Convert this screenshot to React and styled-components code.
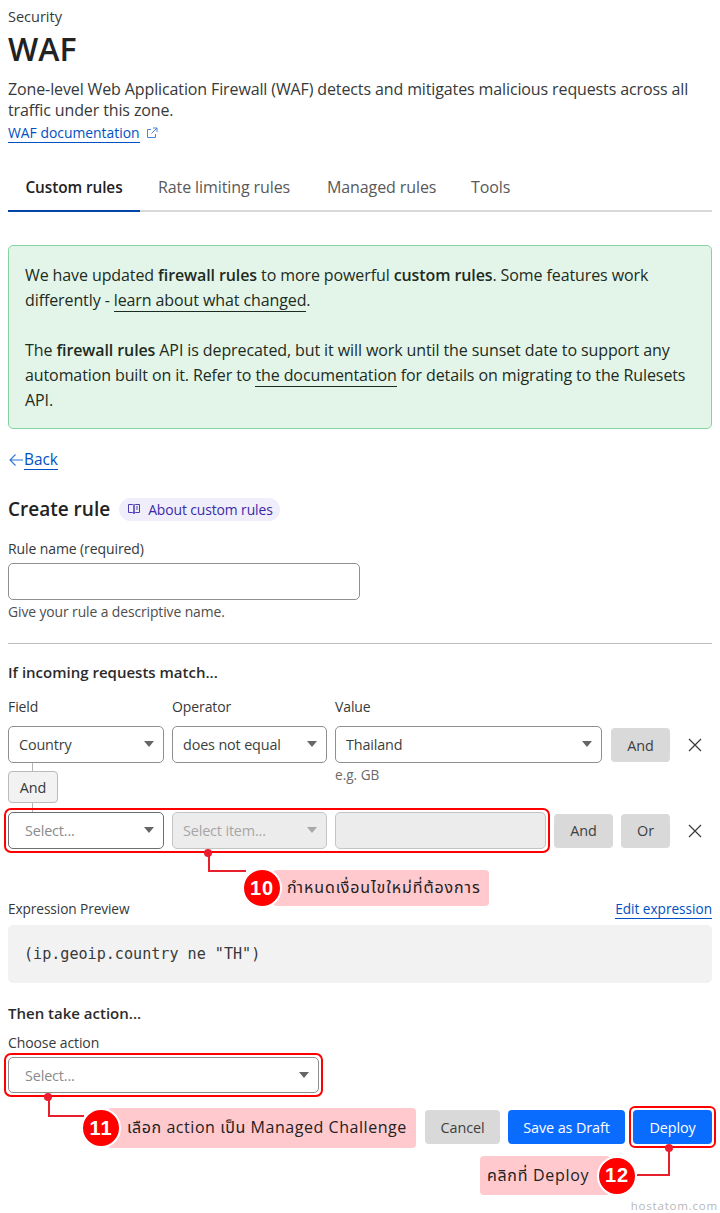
import React from "react";
import styled, { createGlobalStyle } from "styled-components";

const FONT = `"Open Sans", "Noto Sans", "Noto Sans Thai", "Liberation Sans", sans-serif`;

const Global = createGlobalStyle`
  html, body { margin: 0; padding: 0; background: #fff; }
  body { font-family: ${FONT}; color: #36393a; font-size: 14.5px; }
  * { box-sizing: border-box; }
`;

const Page = styled.div`
  width: 720px;
  height: 1213px;
  padding: 7px 8px 0;
  overflow: hidden;
`;

const Crumb = styled.div`
  font-size: 14.5px;
  line-height: 20px;
  color: #36393a;
`;
const Title = styled.h1`
  margin: 1px 0 9px;
  font-size: 32px;
  line-height: 42px;
  font-weight: 600;
  color: #222;
`;
const Lead = styled.p`
  margin: 0;
  font-size: 16px;
  line-height: 21px;
  letter-spacing: -0.12px;
`;
const DocLink = styled.div`
  display: flex;
  align-items: center;
  gap: 6px;
  margin-top: 1px;
  height: 22px;
  font-size: 13.9px;
  color: #0051c3;
  svg { color: #4d86d8; }
`;
const Underlined = styled.a`
  color: ${(p) => p.$color || "#0051c3"};
  border-bottom: 1px solid currentColor;
  line-height: ${(p) => p.$lh || "19px"};
  font-size: ${(p) => (p.$size ? `${p.$size}px` : "inherit")};
  text-decoration: none;
`;

const Tabs = styled.div`
  display: flex;
  margin-top: 23px;
  height: 45px;
  border-bottom: 2px solid #d9d9d9;
`;
const Tab = styled.div`
  width: ${(p) => p.$w}px;
  height: 45px;
  padding-top: ${(p) => (p.$active ? 10 : 9)}px;
  text-align: ${(p) => (p.$active ? "center" : "left")};
  padding-left: ${(p) => p.$pad || 0}px;
  font-size: ${(p) => (p.$active ? 15.4 : 16)}px;
  line-height: 22px;
  letter-spacing: -0.1px;
  font-weight: ${(p) => (p.$active ? 600 : 400)};
  color: ${(p) => (p.$active ? "#222" : "#595959")};
  border-bottom: ${(p) => (p.$active ? "2px solid #0045a6" : "none")};
`;

const Banner = styled.div`
  margin-top: 33px;
  height: 184px;
  padding: 17px 16px 0 16px;
  background: #e3f5e9;
  border: 1px solid #84d3a0;
  border-radius: 5px;
  font-size: 16px;
  line-height: 25px;
  letter-spacing: -0.1px;
  color: #1d2b22;
  p { margin: 0 0 25px; }
  b { font-weight: 600; }
`;

const Back = styled.div`
  display: flex;
  align-items: center;
  margin-top: 19px;
  height: 24px;
  font-size: 15.4px;
  color: #0051c3;
`;

const HeadingRow = styled.div`
  display: flex;
  align-items: center;
  gap: 9px;
  margin-top: 25px;
  height: 24px;
`;
const H2 = styled.h2`
  margin: 0;
  font-size: 19px;
  line-height: 24px;
  font-weight: 600;
  color: #222;
`;
const Pill = styled.div`
  display: flex;
  align-items: center;
  gap: 8px;
  height: 23px;
  padding: 0 7px 0 9px;
  border-radius: 12px;
  background: #f1eefc;
  color: #3a2aa8;
  font-size: 13.9px;
  letter-spacing: -0.1px;
`;

const Label = styled.div`
  font-size: 14px;
  line-height: 20px;
  letter-spacing: -0.1px;
  color: #36393a;
`;
const NameLabel = styled(Label)`
  margin-top: 18px;
  margin-bottom: 4px;
`;
const TextInput = styled.div`
  width: 352px;
  height: 37px;
  border: 1px solid #8f8f8f;
  border-radius: 5px;
`;
const Help = styled.div`
  margin-top: 2px;
  font-size: 13.9px;
  line-height: 19px;
  letter-spacing: -0.1px;
  color: #4d4d4d;
`;
const Divider = styled.hr`
  margin: 22px 0 0;
  border: 0;
  border-top: 1px solid #bdbdbd;
`;
const Subhead = styled.div`
  font-size: 15px;
  line-height: 20px;
  font-weight: 600;
  color: #2b2b2b;
  margin-top: ${(p) => p.$mt}px;
`;

const Row = styled.div`
  display: flex;
  align-items: flex-start;
  gap: 8px;
`;
const FirstRow = styled(Row)`
  margin-top: 15px;
  height: 115px;
`;
const Col = styled.div`
  width: ${(p) => p.$w}px;
  flex: none;
`;
const ColLabel = styled(Label)`
  height: 29px;
`;

const SelectBox = styled.div`
  position: relative;
  flex: none;
  width: ${(p) => (p.$w ? `${p.$w}px` : "100%")};
  height: ${(p) => p.$h || 37}px;
  padding-left: ${(p) => p.$pl || 10}px;
  display: flex;
  align-items: center;
  font-size: 14.4px;
  letter-spacing: -0.15px;
  border: 1px solid ${(p) => (p.$disabled ? "#c4c4c4" : p.$strong ? "#6e6e6e" : "#8f8f8f")};
  border-radius: 5px;
  background: ${(p) => (p.$disabled ? "#ececec" : "#fff")};
  color: ${(p) => (p.$muted ? "#8a8a8a" : p.$disabled ? "#a6a6a6" : "#3c3f40")};
  ${(p) =>
    p.$caret
      ? `&::after {
    content: "";
    position: absolute;
    right: 9px;
    top: 14px;
    border-left: 5px solid transparent;
    border-right: 5px solid transparent;
    border-top: 6px solid ${p.$disabled ? "#a9a9a9" : "#666"};
  }`
      : ""}
`;

const Stub = styled.div`
  width: 1px;
  height: ${(p) => p.$h}px;
  margin-left: 24px;
  background: #b5b5b5;
`;
const JoinButton = styled.div`
  width: 50px;
  height: 32px;
  display: flex;
  align-items: center;
  justify-content: center;
  font-size: 14.4px;
  letter-spacing: -0.1px;
  background: #f2f2f2;
  border: 1px solid #bbb;
  border-radius: 4px;
`;
const Hint = styled.div`
  margin-top: 2px;
  font-size: 13.6px;
  line-height: 19px;
  color: #6b6b6b;
`;
const GreyButton = styled.div`
  width: ${(p) => p.$w}px;
  height: 34px;
  margin-top: ${(p) => p.$mt || 0}px;
  margin-left: ${(p) => p.$ml || 0}px;
  flex: none;
  display: flex;
  align-items: center;
  justify-content: center;
  font-size: 14.4px;
  letter-spacing: -0.1px;
  color: #3c3f40;
  background: #d9d9d9;
  border-radius: 4px;
`;
const BlueButton = styled(GreyButton)`
  color: #fff;
  background: #0a6cff;
`;
const Close = styled.div`
  margin-left: ${(p) => p.$ml}px;
  margin-top: ${(p) => p.$mt || 0}px;
  width: 16px;
  height: 16px;
  flex: none;
  color: #3a3a3a;
`;

/* red outline that sits 4px outside whatever it wraps */
const Frame = styled.div`
  position: relative;
  flex: none;
  margin: -4px;
  padding: 2px;
  width: ${(p) => (p.$w ? `${p.$w}px` : "auto")};
  border: 2px solid #ff0000;
  border-radius: 7px;
  display: flex;
  gap: 8px;
  &::after {
    content: "";
    position: absolute;
    left: ${(p) => p.$dot}px;
    bottom: -6px;
    width: 8px;
    height: 8px;
    border-radius: 50%;
    background: #ed1c2e;
  }
`;
const ActionFrame = styled(Frame)`
  margin: 0 0 -4px -4px;
`;
const DeployFrame = styled(Frame)`
  margin: -4px -4px -4px 4px;
  border-radius: 6px;
`;

const SecondRow = styled(Row)`
  height: 37px;
  align-items: center;
`;

const Callout = styled.div`
  position: relative;
  flex: none;
  display: flex;
  align-items: center;
  width: ${(p) => p.$w}px;
  height: ${(p) => p.$h}px;
  margin-left: ${(p) => p.$ml || 0}px;
  margin-top: ${(p) => p.$mt || 0}px;
  padding-left: ${(p) => p.$pl}px;
  background: #ffc9ce;
  border-radius: 4px;
  font-size: 16px;
  letter-spacing: ${(p) => p.$ls || 0.5}px;
  color: #222;
  white-space: nowrap;
`;
const Badge = styled.div`
  position: absolute;
  top: 50%;
  ${(p) => (p.$right !== undefined ? `right: ${p.$right}px;` : `left: ${p.$left}px;`)}
  transform: translateY(-50%);
  width: 40px;
  height: 40px;
  display: flex;
  align-items: center;
  justify-content: center;
  border-radius: 50%;
  background: #ff0000;
  border: 2px solid #fff;
  color: #fff;
  font-family: "Liberation Sans", sans-serif;
  font-size: 20px;
  font-weight: 700;
  letter-spacing: 1px;
`;
/* elbow line between the frame and the badge */
const Elbow = styled.div`
  position: absolute;
  left: ${(p) => p.$l}px;
  top: ${(p) => p.$t}px;
  width: ${(p) => p.$w}px;
  height: ${(p) => p.$h}px;
  border-bottom: 2px solid #e8202e;
  ${(p) => (p.$flip ? "border-right" : "border-left")}: 2px solid #e8202e;
`;

const PreviewHead = styled.div`
  display: flex;
  justify-content: space-between;
  align-items: center;
  height: 20px;
  margin-top: -7px;
`;
const PreviewLabel = styled(Label)`
  font-size: 13.7px;
`;
const CodeBox = styled.div`
  margin-top: 6px;
  height: 58px;
  padding-left: 16px;
  display: flex;
  align-items: center;
  background: #f2f2f2;
  border-radius: 5px;
  font-family: "DejaVu Sans Mono", "Liberation Mono", monospace;
  font-size: 15.1px;
  color: #36393a;
`;
const ActionLabel = styled(Label)`
  margin-top: 10px;
`;

const ActionRow = styled.div`
  display: flex;
  align-items: flex-start;
  margin-top: 17px;
`;

const CalloutRight = styled.div`
  display: flex;
  margin-left: 472px;
  margin-top: 8px;
`;
const Watermark = styled.div`
  position: absolute;
  right: -6px;
  top: 1191px;
  font-size: 11.5px;
  letter-spacing: 0.8px;
  color: #b8b8b8;
`;
const Shell = styled.div`
  position: relative;
`;

const XIcon = () => (
  <svg width="16" height="16" viewBox="0 0 16 16" fill="none" stroke="currentColor" strokeWidth="1.2">
    <path d="M2 2l12 12M14 2L2 14" />
  </svg>
);
const ExternalIcon = () => (
  <svg width="12" height="12" viewBox="0 0 12 12" fill="none" stroke="currentColor" strokeWidth="1">
    <path d="M9.500 7v3.500h-8v-8H5M7 1h4v4M11 1L5.500 6.500" />
  </svg>
);
const ArrowIcon = () => (
  <svg width="16" height="14" viewBox="0 0 16 14" fill="none" stroke="#2f74d8" strokeWidth="1.1">
    <path d="M15 7H2M7.500 1.500L2 7l5.500 5.500" />
  </svg>
);
const BookIcon = () => (
  <svg width="12" height="10" viewBox="0 0 12 10" fill="none" stroke="#4a3ab5" strokeWidth="1">
    <path d="M.5.5h4.200c.7 0 1.300.4 1.300 1v8c0-.6-.6-1-1.300-1H.5zM11.500.5H7.300C6.600.5 6 .9 6 1.500v8c0-.6.6-1 1.300-1h4.200zM8 3h2M8 5h2" />
  </svg>
);

export default function App() {
  return (
    <Page>
      <Global />
      <Shell>
        <Crumb>Security</Crumb>
        <Title>WAF</Title>
        <Lead>
          Zone-level Web Application Firewall (WAF) detects and mitigates malicious requests across all
          traffic under this zone.
        </Lead>
        <DocLink>
          <Underlined>WAF documentation</Underlined>
          <ExternalIcon />
        </DocLink>

        <Tabs>
          <Tab $active $w={132}>Custom rules</Tab>
          <Tab $w={169} $pad={18}>Rate limiting rules</Tab>
          <Tab $w={144} $pad={18}>Managed rules</Tab>
          <Tab $w={80} $pad={18}>Tools</Tab>
        </Tabs>

        <Banner>
          <p>
            We have updated <b>firewall rules</b> to more powerful <b>custom rules</b>. Some features work
            differently - <Underlined $color="#1d2b22" $lh="22px">learn about what changed</Underlined>.
          </p>
          <p>
            The <b>firewall rules</b> API is deprecated, but it will work until the sunset date to support any
            automation built on it. Refer to <Underlined $color="#1d2b22" $lh="22px">the documentation</Underlined> for
            details on migrating to the Rulesets API.
          </p>
        </Banner>

        <Back>
          <ArrowIcon />
          <Underlined>Back</Underlined>
        </Back>

        <HeadingRow>
          <H2>Create rule</H2>
          <Pill>
            <BookIcon />
            About custom rules
          </Pill>
        </HeadingRow>

        <NameLabel>Rule name (required)</NameLabel>
        <TextInput />
        <Help>Give your rule a descriptive name.</Help>
        <Divider />

        <Subhead $mt={18}>If incoming requests match...</Subhead>
        <FirstRow>
          <Col $w={156}>
            <ColLabel>Field</ColLabel>
            <SelectBox $caret>Country</SelectBox>
            <Stub $h={8} />
            <JoinButton>And</JoinButton>
            <Stub $h={9} />
          </Col>
          <Col $w={155}>
            <ColLabel>Operator</ColLabel>
            <SelectBox $caret>does not equal</SelectBox>
          </Col>
          <Col $w={267}>
            <ColLabel>Value</ColLabel>
            <SelectBox $caret>Thailand</SelectBox>
            <Hint>e.g. GB</Hint>
          </Col>
          <GreyButton $w={59} $mt={31} $ml={1}>And</GreyButton>
          <Close $ml={9} $mt={40}><XIcon /></Close>
        </FirstRow>

        <SecondRow>
          <Frame $w={546} $dot={198}>
            <SelectBox $caret $w={156} $pl={16} $strong $muted>Select...</SelectBox>
            <SelectBox $caret $w={155} $disabled>Select item...</SelectBox>
            <SelectBox $w={211} $disabled />
          </Frame>
          <GreyButton $w={59}>And</GreyButton>
          <GreyButton $w={49}>Or</GreyButton>
          <Close $ml={9}><XIcon /></Close>
        </SecondRow>

        <Callout $w={216} $h={36} $ml={265} $mt={21} $pl={14} $ls={0.9}>
          กำหนดเงื่อนไขใหม่ที่ต้องการ
          <Badge $left={-31}>10</Badge>
          <Elbow $l={-65} $t={-17} $w={38} $h={19} />
        </Callout>

        <PreviewHead>
          <PreviewLabel>Expression Preview</PreviewLabel>
          <Underlined $lh="18px" $size={13.6}>Edit expression</Underlined>
        </PreviewHead>
        <CodeBox>(ip.geoip.country ne "TH")</CodeBox>

        <Subhead $mt={20}>Then take action...</Subhead>
        <ActionLabel>Choose action</ActionLabel>
        <ActionFrame $w={319} $dot={38}>
          <SelectBox $caret $pl={16} $h={36} $muted>Select...</SelectBox>
        </ActionFrame>

        <ActionRow>
          <Callout $w={308} $h={40} $ml={100} $mt={-2} $pl={19} $ls={0.55}>
            เลือก action เป็น Managed Challenge
            <Badge $left={-27}>11</Badge>
            <Elbow $l={-60} $t={-11} $w={36} $h={20} />
          </Callout>
          <GreyButton $w={75} $ml={9}>Cancel</GreyButton>
          <BlueButton $w={117} $ml={8}>Save as Draft</BlueButton>
          <DeployFrame $dot={34}>
            <BlueButton $w={79}>Deploy</BlueButton>
          </DeployFrame>
        </ActionRow>

        <CalloutRight>
          <Callout $w={130} $h={39} $pl={7} $ls={0.7}>
            คลิกที่ Deploy
            <Badge $right={-27}>12</Badge>
            <Elbow $flip $l={157} $t={-9} $w={33} $h={29} />
          </Callout>
        </CalloutRight>
        <Watermark>hostatom.com</Watermark>
      </Shell>
    </Page>
  );
}
